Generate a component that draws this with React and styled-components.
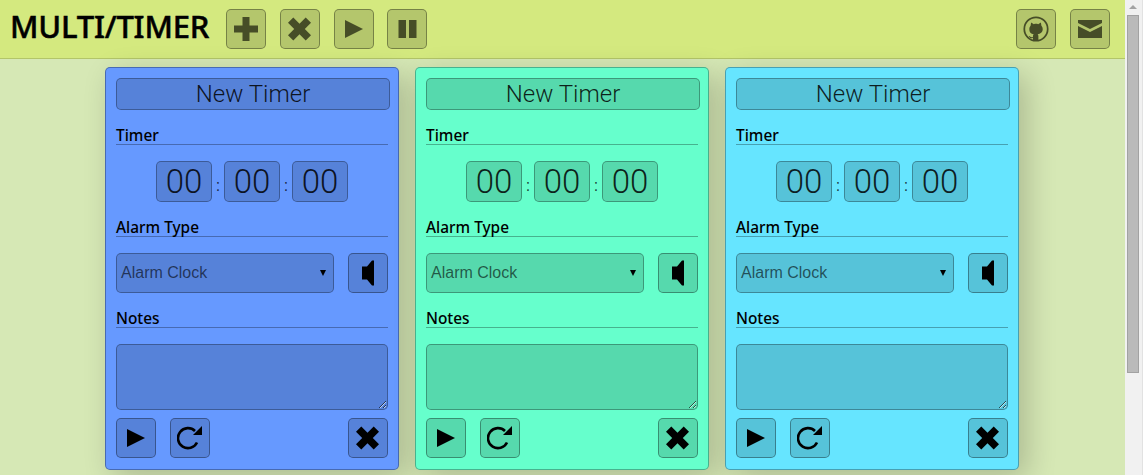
import React from 'react';
import styled, { createGlobalStyle } from 'styled-components';

const GlobalStyle = createGlobalStyle`
  body {
    margin: 0;
    height: 100vh;
    overflow: hidden;
    background: #d6e8b5;
    font-family: "Noto Sans", "Liberation Sans", sans-serif;
  }
`;

const Shell = styled.div`
  display: flex;
  height: 100vh;
`;
const Page = styled.div`
  flex: 1;
  min-width: 0;
`;
const ScrollTrack = styled.div`
  box-sizing: border-box;
  flex: none;
  width: 18px;
  padding: 5px 3px 0 2px;
  background: #f1f1f1;
  border-right: 1px solid #e2e2e2;
`;
const ScrollArrow = styled.div`
  width: 0;
  height: 0;
  margin: 0 auto 6px;
  border-left: 4px solid transparent;
  border-right: 4px solid transparent;
  border-bottom: 4px solid #a3a3a3;
`;
const ScrollThumb = styled.div`
  box-sizing: border-box;
  height: 358px;
  background: #bababa;
  border: 1px solid #a2a2a2;
`;

const Header = styled.header`
  display: flex;
  align-items: center;
  height: 58px;
  padding: 0 15px 0 10px;
  background: #d4e97f;
  border-bottom: 1px solid #b3c569;
`;
const Logo = styled.h1`
  margin: 0 19px 6px 0;
  width: 197px;
  white-space: nowrap;
  font-size: 31px;
  font-weight: 500;
  letter-spacing: -0.2px;
  -webkit-text-stroke: 0.5px #000;
  color: #000;
`;
const IconButton = styled.button`
  width: 40px;
  height: 40px;
  margin-right: ${p => p.$gap ?? 14}px;
  padding: 0;
  display: flex;
  align-items: center;
  justify-content: center;
  flex: none;
  background: rgba(0, 0, 0, 0.15);
  border: 1px solid rgba(0, 0, 0, 0.35);
  border-radius: 5px;
  color: ${p => p.$dim ? '#464d27' : '#000'};
`;
const Spacer = styled.div`
  flex: 1;
`;
const Board = styled.main`
  display: flex;
  justify-content: center;
  gap: 16px;
  padding: 8px 1px 0 0;
`;
const Card = styled.section`
  box-sizing: border-box;
  width: 294px;
  height: 403px;
  padding: 10px;
  background: ${p => p.$color};
  border: 1px solid rgba(0, 0, 0, 0.3);
  border-radius: 5px;
  box-shadow: 8px 8px 30px rgba(0, 0, 0, 0.2);
`;
const TitleInput = styled.input`
  box-sizing: content-box;
  display: block;
  width: 272px;
  height: 30px;
  padding: 0;
  text-align: center;
  font-family: "Roboto", sans-serif;
  font-weight: 300;
  font-size: 24px;
  background: rgba(0, 0, 0, 0.15);
  border: 1px solid rgba(0, 0, 0, 0.3);
  border-radius: 5px;
  &::placeholder {
    color: rgba(0, 0, 0, 0.85);
    opacity: 1;
  }
`;
const Heading = styled.h2`
  margin: 10px 0 0;
  height: 24px;
  line-height: 32px;
  font-size: 15.4px;
  font-weight: 500;
  color: #000;
  border-bottom: 1px solid rgba(0, 0, 0, 0.3);
`;
const TimeRow = styled.div`
  display: flex;
  justify-content: center;
  align-items: center;
  margin-top: 16px;
  height: 41px;
`;
const TimeBox = styled.div`
  box-sizing: border-box;
  width: 56px;
  height: 41px;
  line-height: 39px;
  text-align: center;
  font-family: "Roboto", sans-serif;
  font-weight: 300;
  font-size: 33px;
  color: rgba(0, 0, 0, 0.85);
  background: rgba(0, 0, 0, 0.15);
  border: 1px solid rgba(0, 0, 0, 0.3);
  border-radius: 5px;
`;
const Colon = styled.span`
  width: 12px;
  padding-top: 8px;
  text-align: center;
  font-family: "Liberation Sans", sans-serif;
  font-size: 16px;
  color: rgba(0, 0, 0, 0.72);
`;
const AlarmRow = styled.div`
  display: flex;
  justify-content: space-between;
  margin-top: 16px;
`;
const Select = styled.div`
  box-sizing: border-box;
  width: 218px;
  height: 40px;
  padding: 0 7px 0 4px;
  display: flex;
  align-items: center;
  justify-content: space-between;
  font-family: "Liberation Sans", sans-serif;
  font-size: 16px;
  color: rgba(0, 0, 0, 0.6);
  background: rgba(0, 0, 0, 0.15);
  border: 1px solid rgba(0, 0, 0, 0.3);
  border-radius: 5px;
`;
const Caret = styled.svg`
  width: 6px;
  height: 6px;
  fill: #000;
`;
const Notes = styled.textarea`
  box-sizing: border-box;
  display: block;
  width: 272px;
  height: 66px;
  margin-top: 16px;
  background: rgba(0, 0, 0, 0.15);
  border: 1px solid rgba(0, 0, 0, 0.3);
  border-radius: 5px;
`;
const Actions = styled.div`
  display: flex;
  margin-top: 8px;
`;

const Glyph = ({ d }) => (
  <svg width="26" height="26" viewBox="0 0 26 26" fill="currentColor"><path d={d} /></svg>
);
const PLUS = 'M9.5 1h7v8.5h8.5v7h-8.5V25h-7v-8.5H1v-7h8.5z';
const CROSS = 'M6.300 1.500L12.500 7.700 18.700 1.500 24 6.800 17.800 13 24 19.200 18.700 24.500 12.500 18.300 6.300 24.500 1 19.200 7.200 13 1 6.800z';
const PLAY = 'M4 4l18 9-18 9z';
const PAUSE = 'M4.5 4h7.5v18H4.5zM15 4h7.5v18H15z';
const SPEAKER = 'M7 6.500h5l5-6h2v25h-2l-5-6H7z';

const Reload = () => (
  <svg width="26" height="26" viewBox="0 0 26 26" fill="none">
    <path d="M20 17.5A10 10 0 1 1 18 6" stroke="currentColor" strokeWidth="2.6" />
    <path d="M25 1v9h-9z" fill="currentColor" />
  </svg>
);
const Mail = () => (
  <svg width="24" height="18" viewBox="0 0 24 18" fill="currentColor">
    <path d="M0 0h24v3L12 9 0 3zM0 6l12 6 12-6v12H0z" />
  </svg>
);
const Github = () => (
  <svg width="26" height="26" viewBox="0 0 24 24" fill="currentColor">
    <circle cx="12" cy="12" r="10.8" fill="none" stroke="currentColor" strokeWidth="1.6" />
    <path d="M7.5 6l2.5 1.5c1.3-.4 2.7-.4 4 0L16.500 6l.5 3c.8.9 1.200 2 1.200 3 0 3-2.200 4.500-4.700 4.800.5.4.7 1 .7 1.800v3.600h-5v-1.800c-2 .4-3.200-.3-4-2l1 .2c.8.8 1.800 1.200 3 .8v-.8c0-.8.2-1.400.7-1.800C7.200 16.500 5.800 15 5.800 12c0-1 .4-2.100 1.200-3z" />
  </svg>
);

const TimerCard = ({ color }) => (
  <Card $color={color}>
    <TitleInput placeholder="New Timer" />
    <Heading>Timer</Heading>
    <TimeRow>
      <TimeBox>00</TimeBox>
      <Colon>:</Colon>
      <TimeBox>00</TimeBox>
      <Colon>:</Colon>
      <TimeBox>00</TimeBox>
    </TimeRow>
    <Heading>Alarm Type</Heading>
    <AlarmRow>
      <Select>
        Alarm Clock
        <Caret viewBox="0 0 6 6"><path d="M0 0h6L3 6z" /></Caret>
      </Select>
      <IconButton $gap={0}><Glyph d={SPEAKER} /></IconButton>
    </AlarmRow>
    <Heading>Notes</Heading>
    <Notes />
    <Actions>
      <IconButton><Glyph d={PLAY} /></IconButton>
      <IconButton><Reload /></IconButton>
      <Spacer />
      <IconButton $gap={0}><Glyph d={CROSS} /></IconButton>
    </Actions>
  </Card>
);

export default function App() {
  return (
    <Shell>
      <GlobalStyle />
      <Page>
        <Header>
          <Logo>MULTI/TIMER</Logo>
          <IconButton $dim><Glyph d={PLUS} /></IconButton>
          <IconButton $dim><Glyph d={CROSS} /></IconButton>
          <IconButton $dim $gap={13}><Glyph d={PLAY} /></IconButton>
          <IconButton $dim><Glyph d={PAUSE} /></IconButton>
          <Spacer />
          <IconButton $dim><Github /></IconButton>
          <IconButton $dim $gap={0}><Mail /></IconButton>
        </Header>
        <Board>
          <TimerCard color="#6699ff" />
          <TimerCard color="#66ffcc" />
          <TimerCard color="#66e5ff" />
        </Board>
      </Page>
      <ScrollTrack>
        <ScrollArrow />
        <ScrollThumb />
      </ScrollTrack>
    </Shell>
  );
}
